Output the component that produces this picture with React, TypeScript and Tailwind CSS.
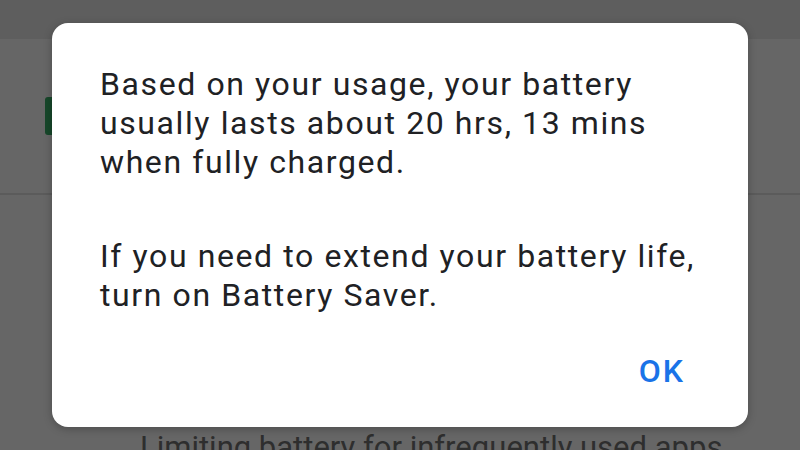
export default function App() {
  return (
    <div className="relative w-[800px] h-[450px] overflow-hidden bg-[#666666] font-['Roboto',sans-serif]">
      {/* dimmed settings screen behind the dialog */}
      <div className="flex flex-col h-full">
        <div className="h-[39px] bg-[#5e5e5e] shrink-0" />
        <div className="h-[154px] flex items-start pt-[58px] pl-[45px] shrink-0">
          <div className="w-[22px] h-[38px] rounded-[3px] bg-[#17472a]" />
        </div>
        <div className="h-[2px] bg-[#5b5b5b] shrink-0" />
        <div className="flex-1" />
        <div className="pl-[140px] h-[22px] overflow-visible">
          <p className="text-[31px] leading-[39px] text-[#2e2e2e] whitespace-nowrap">Limiting battery for infrequently used apps</p>
        </div>
      </div>

      {/* dialog */}
      <div className="absolute left-[52px] top-[23px] w-[696px] h-[404px] bg-white rounded-[16px] shadow-[0_2px_8px_rgba(0,0,0,0.25)] flex flex-col pl-[48px] pr-[30px] pt-[42px]">
        <p className="text-[32px] leading-[39px] tracking-[1.6px] text-[#202124] whitespace-nowrap">
          Based on your usage, your battery
          <br />
          usually lasts about 20 hrs, 13 mins
          <br />
          when fully charged.
        </p>
        <p className="mt-[55px] text-[32px] leading-[39px] tracking-[1.6px] text-[#202124] whitespace-nowrap">
          If you need to extend your battery life,
          <br />
          turn on Battery Saver.
        </p>
        <div className="flex justify-end mt-[37px] pr-[33px]">
          <span className="text-[32px] leading-[39px] font-medium text-[#1a73e8] tracking-[2px]">OK</span>
        </div>
      </div>
    </div>
  )
}
